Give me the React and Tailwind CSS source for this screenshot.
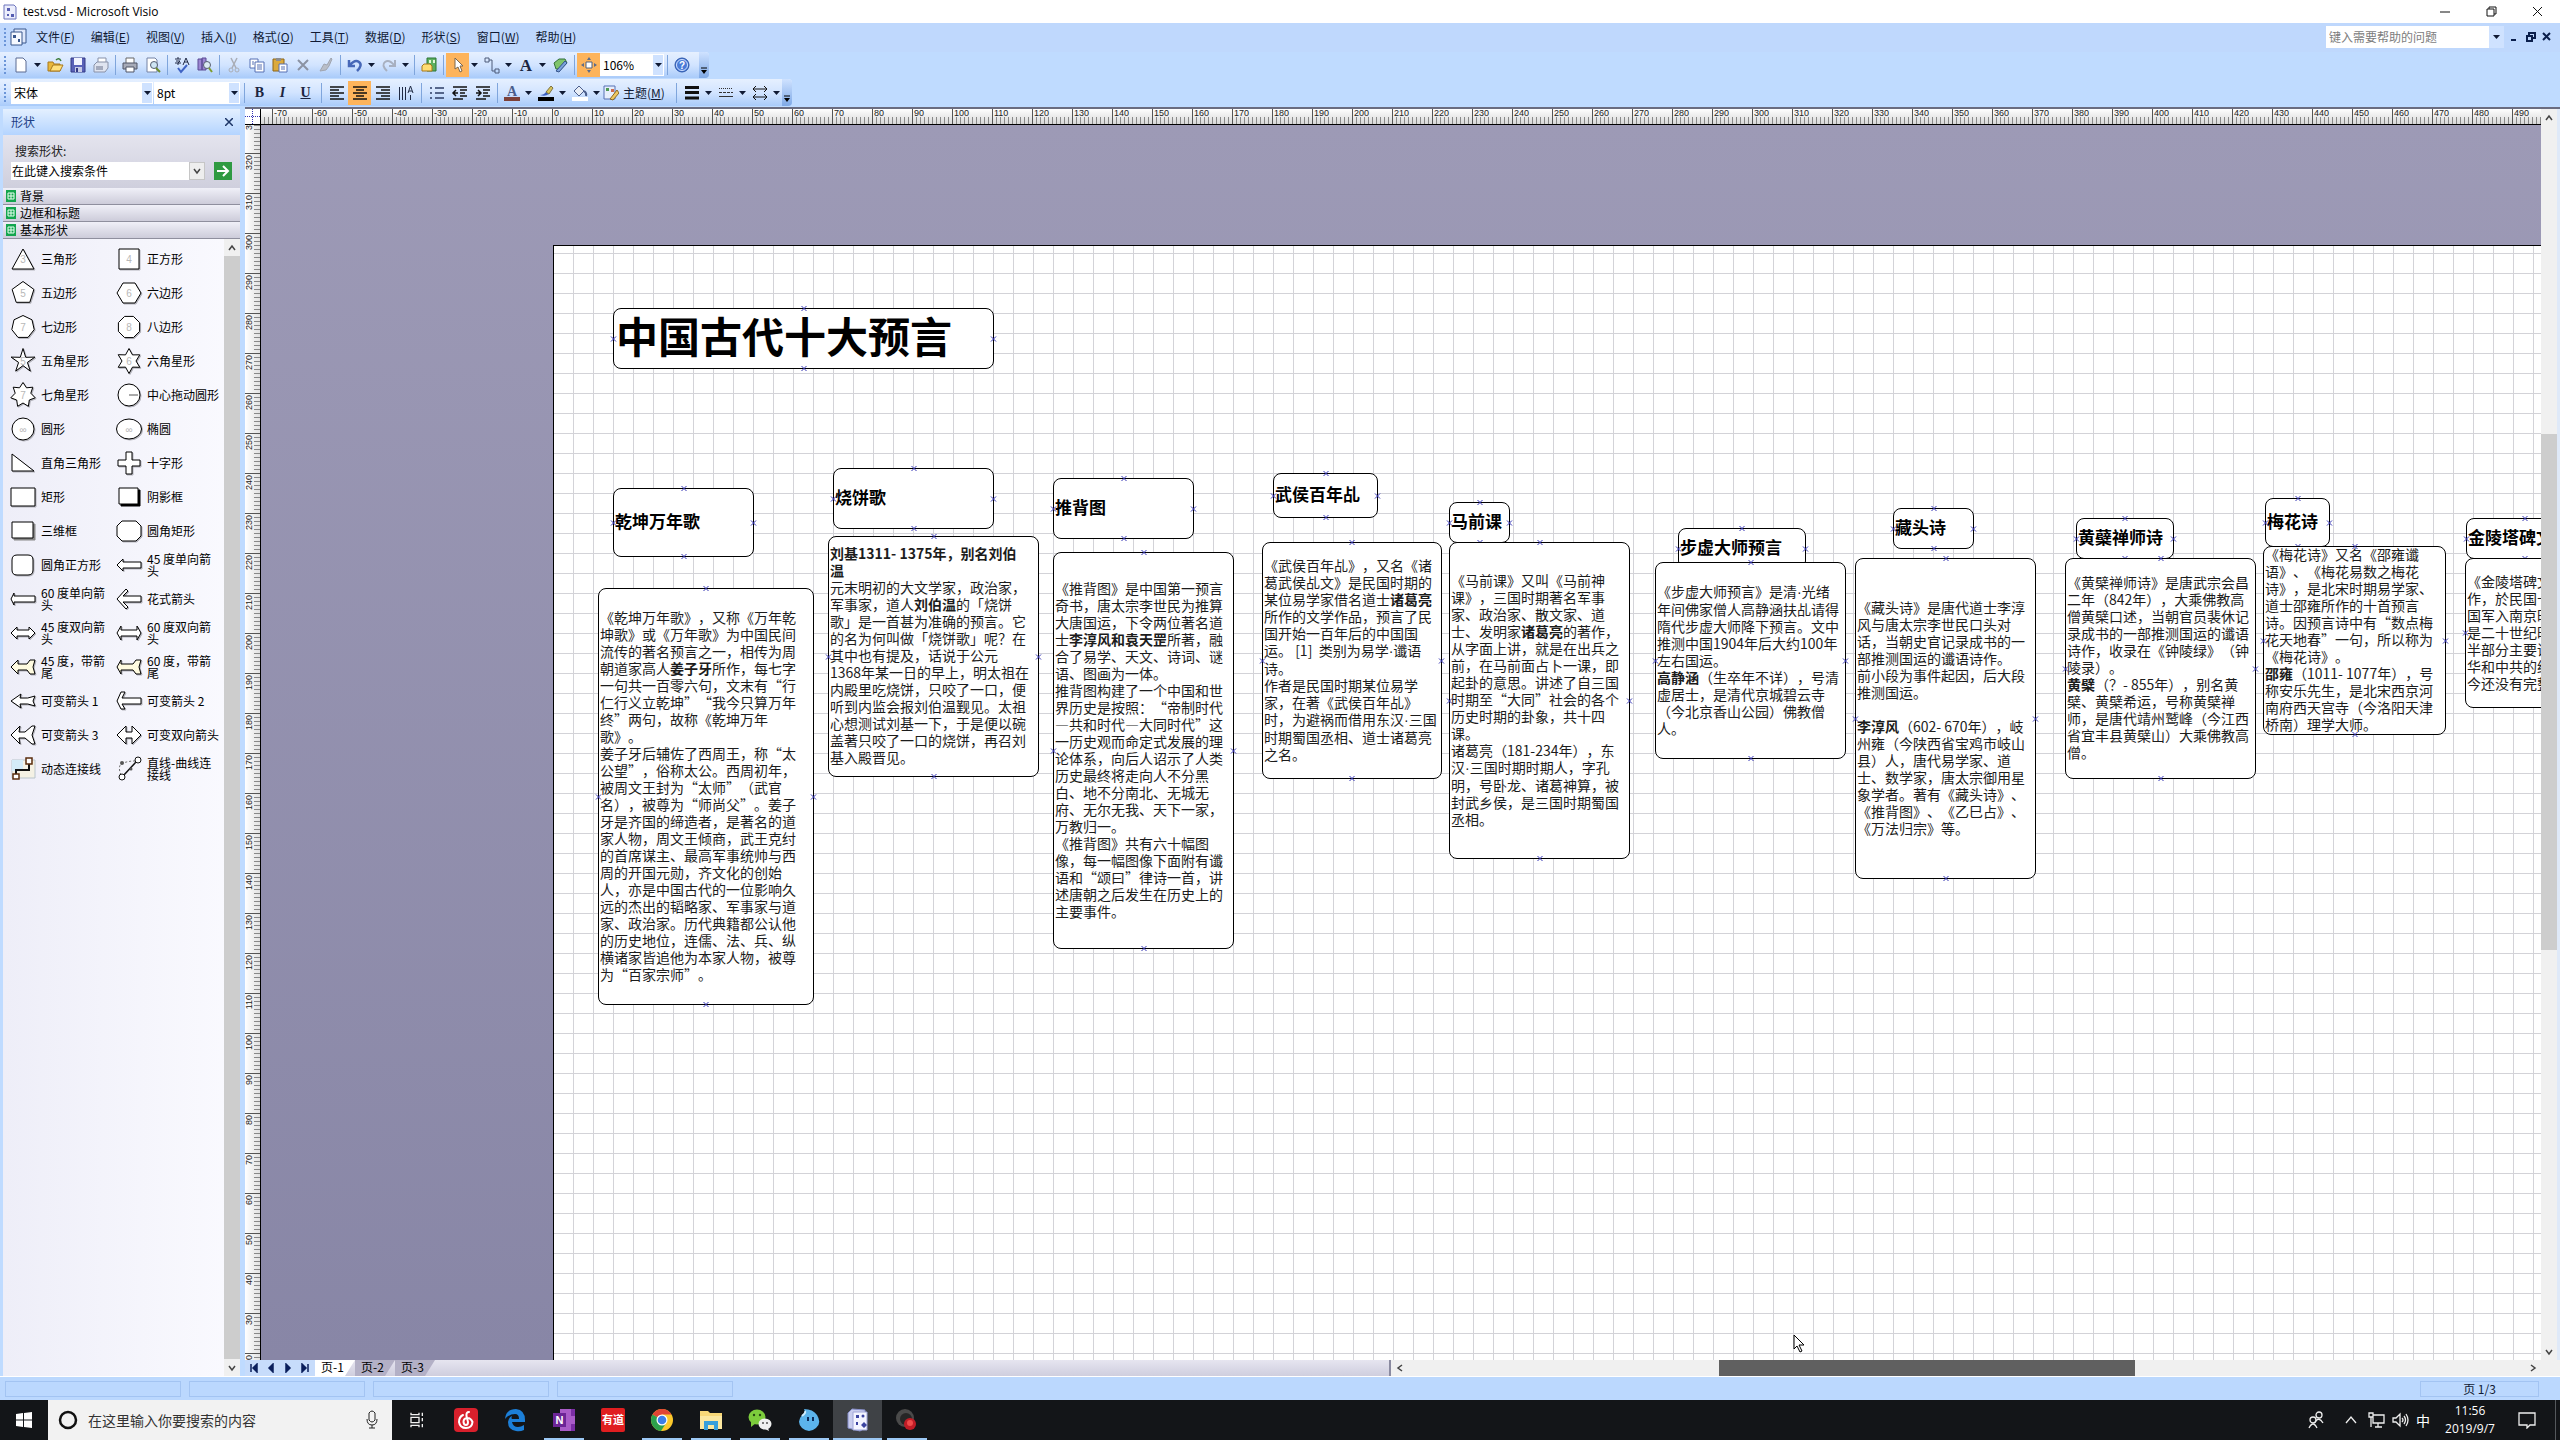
import React from "react";

const MENUS = [
  ["文件", "F"], ["编辑", "E"], ["视图", "V"], ["插入", "I"], ["格式", "O"],
  ["工具", "T"], ["数据", "D"], ["形状", "S"], ["窗口", "W"], ["帮助", "H"],
];

// x / y / w / h are page coordinates, *text* is bold
const NODES = [
  { x: 59, y: 62, w: 381, h: 61, kind: "title", lines: ["中国古代十大预言"] },
  { x: 59, y: 242, w: 141, h: 69, kind: "head", lines: ["乾坤万年歌"] },
  { x: 279, y: 222, w: 161, h: 61, kind: "head", lines: ["烧饼歌"] },
  { x: 499, y: 232, w: 141, h: 61, kind: "head", lines: ["推背图"] },
  { x: 719, y: 227, w: 105, h: 45, kind: "head", lines: ["武侯百年乩"] },
  { x: 895, y: 256, w: 61, h: 41, kind: "head", lines: ["马前课"] },
  { x: 1124, y: 282, w: 128, h: 41, kind: "head", lines: ["步虚大师预言"] },
  { x: 1339, y: 262, w: 81, h: 41, kind: "head", lines: ["藏头诗"] },
  { x: 1522, y: 272, w: 98, h: 41, kind: "head", lines: ["黄蘗禅师诗"] },
  { x: 1711, y: 252, w: 65, h: 49, kind: "head", lines: ["梅花诗"] },
  { x: 1912, y: 272, w: 117, h: 41, kind: "head", lines: ["金陵塔碑文"] },
  {
    x: 44, y: 342, w: 216, h: 417,
    lines: [
      "《乾坤万年歌》，又称《万年乾", "坤歌》或《万年歌》为中国民间", "流传的著名预言之一，相传为周",
      "朝道家高人*姜子牙*所作，每七字", "一句共一百零六句，文末有“行", "仁行义立乾坤”“我今只算万年",
      "终”两句，故称《乾坤万年", "歌》。", "姜子牙后辅佐了西周王，称“太", "公望”，俗称太公。西周初年，",
      "被周文王封为“太师”（武官", "名），被尊为“师尚父”。姜子", "牙是齐国的缔造者，是著名的道",
      "家人物，周文王倾商，武王克纣", "的首席谋主、最高军事统帅与西", "周的开国元勋，齐文化的创始",
      "人，亦是中国古代的一位影响久", "远的杰出的韬略家、军事家与道", "家、政治家。历代典籍都公认他",
      "的历史地位，连儒、法、兵、纵", "横诸家皆追他为本家人物，被尊", "为“百家宗师”。",
    ],
  },
  {
    x: 274, y: 290, w: 211, h: 241,
    lines: [
      "*刘基1311- 1375年，别名刘伯*", "*温*", "元末明初的大文学家，政治家，", "军事家，道人*刘伯温*的「烧饼",
      "歌」是一首甚为准确的预言。它", "的名为何叫做「烧饼歌」呢？在", "其中也有提及，话说于公元",
      "1368年某一日的早上，明太祖在", "内殿里吃烧饼，只咬了一口，便", "听到内监会报刘伯温觐见。太祖",
      "心想测试刘基一下，于是便以碗", "盖著只咬了一口的烧饼，再召刘", "基入殿晋见。",
    ],
  },
  {
    x: 499, y: 306, w: 181, h: 397,
    lines: [
      "《推背图》是中国第一预言", "奇书，唐太宗李世民为推算", "大唐国运，下令两位著名道", "士*李淳风和袁天罡*所著，融",
      "合了易学、天文、诗词、谜", "语、图画为一体。", "推背图构建了一个中国和世", "界历史是按照：“帝制时代",
      "—共和时代—大同时代”这", "一历史观而命定式发展的理", "论体系，向后人诏示了人类", "历史最终将走向人不分黑",
      "白、地不分南北、无城无", "府、无尔无我、天下一家，", "万教归一。", "《推背图》共有六十幅图", "像，每一幅图像下面附有谶",
      "语和“颂曰”律诗一首，讲", "述唐朝之后发生在历史上的", "主要事件。",
    ],
  },
  {
    x: 708, y: 296, w: 180, h: 237,
    lines: [
      "《武侯百年乩》，又名《诸", "葛武侯乩文》是民国时期的", "某位易学家借名道士*诸葛亮*", "所作的文学作品，预言了民",
      "国开始一百年后的中国国", "运。 [1]  类别为易学·谶语", "诗。", "作者是民国时期某位易学", "家，在著《武侯百年乩》",
      "时，为避祸而借用东汉·三国", "时期蜀国丞相、道士诸葛亮", "之名。",
    ],
  },
  {
    x: 895, y: 296, w: 181, h: 317,
    lines: [
      "《马前课》又叫《马前神", "课》，三国时期著名军事", "家、政治家、散文家、道", "士、发明家*诸葛亮*的著作，",
      "从字面上讲，就是在出兵之", "前，在马前面占卜一课，即", "起卦的意思。讲述了自三国", "时期至“大同”社会的各个",
      "历史时期的卦象，共十四", "课。", "诸葛亮（181-234年），东", "汉·三国时期时期人，字孔", "明，号卧龙、诸葛神算，被",
      "封武乡侯，是三国时期蜀国", "丞相。",
    ],
  },
  {
    x: 1101, y: 316, w: 191, h: 197,
    lines: [
      "《步虚大师预言》是清·光绪", "年间佛家僧人高静涵扶乩请得", "隋代步虚大师降下预言。文中", "推测中国1904年后大约100年",
      "左右国运。", "*高静涵*（生卒年不详），号清", "虚居士，是清代京城碧云寺", "（今北京香山公园）佛教僧", "人。",
    ],
  },
  {
    x: 1301, y: 312, w: 181, h: 321,
    lines: [
      "《藏头诗》是唐代道士李淳", "风与唐太宗李世民口头对", "话，当朝史官记录成书的一", "部推测国运的谶语诗作。", "前小段为事件起因，后大段",
      "推测国运。", "", "*李淳风*（602- 670年），岐", "州雍（今陕西省宝鸡市岐山", "县）人，唐代易学家、道", "士、数学家，唐太宗御用星",
      "象学者。著有《藏头诗》、", "《推背图》、《乙巳占》、", "《万法归宗》等。",
    ],
  },
  {
    x: 1511, y: 312, w: 191, h: 221,
    lines: [
      "《黄檗禅师诗》是唐武宗会昌", "二年（842年），大乘佛教高", "僧黄檗口述，当朝官员裴休记", "录成书的一部推测国运的谶语",
      "诗作，收录在《钟陵绿》（钟", "陵录）。", "*黄檗*（？- 855年），别名黄", "檗、黄檗希运，号称黄檗禅", "师，是唐代靖州鹫峰（今江西",
      "省宜丰县黄檗山）大乘佛教高", "僧。",
    ],
  },
  {
    x: 1709, y: 300, w: 183, h: 189,
    lines: [
      "《梅花诗》又名《邵雍谶", "语》、《梅花易数之梅花", "诗》，是北宋时期易学家、", "道士邵雍所作的十首预言", "诗。因预言诗中有“数点梅",
      "花天地春”一句，所以称为", "《梅花诗》。", "*邵雍*（1011- 1077年），号", "称安乐先生，是北宋西京河", "南府西天宫寺（今洛阳天津", "桥南）理学大师。",
    ],
  },
  {
    x: 1911, y: 312, w: 181, h: 150,
    lines: ["《金陵塔碑文》是刘伯温所", "作，於民国十六年北伐时，", "国军入南京时所发现，内容", "是二十世纪时中国的预言，", "半部分主要讲述国民党、中", "华和中共的纷争，预言至", "今还没有完整应验。"],
  },
];

// the middle dot is a narrow latin one
const dots = (s) =>
  s.split("·").map((t, i) => (
    <React.Fragment key={i}>
      {i > 0 && <span className="font-['Liberation_Sans',sans-serif]">·</span>}
      {t}
    </React.Fragment>
  ));

const rich = (line) => line.split("*").map((s, i) => (i % 2 ? <b key={i}>{s}</b> : <span key={i}>{dots(s)}</span>));

function Connector({ className }) {
  return (
    <svg viewBox="0 0 7 7" className={`absolute h-[7px] w-[7px] ${className}`}>
      <path d="M1 1L6 6M6 1L1 6" stroke="#3434b4" strokeWidth="1" />
    </svg>
  );
}

function Node({ node }) {
  const { x, y, w, h, kind, lines } = node;
  let text = "pb-[2px] pl-px text-sm leading-[17px] text-[#1c1c1c]";
  if (kind === "head") text = "pb-[4px] pl-px text-[17px] leading-5 font-bold text-black";
  if (kind === "title") text = "pb-[8px] pl-[2px] text-[42px] leading-[52px] font-bold text-black";
  return (
    <div
      className={`absolute flex flex-col justify-center rounded-lg border border-black bg-white whitespace-pre ${text}`}
      style={{ left: x, top: y, width: w, height: h }}
    >
      {lines.map((l, i) => (
        <div key={i}>{l ? rich(l) : "\u00a0"}</div>
      ))}
      <Connector className="-top-1 left-1/2 -translate-x-1/2" />
      <Connector className="-bottom-1 left-1/2 -translate-x-1/2" />
      <Connector className="top-1/2 -left-1 -translate-y-1/2" />
      <Connector className="top-1/2 -right-1 -translate-y-1/2" />
    </div>
  );
}

/* ---------- stencil shapes ---------- */

const ring = (n, r, inner, start = -90) => {
  const steps = inner ? n * 2 : n;
  const pts = [];
  for (let i = 0; i < steps; i++) {
    const a = ((start + (360 / steps) * i) * Math.PI) / 180;
    const rr = inner && i % 2 ? inner : r;
    pts.push(`${(13 + rr * Math.cos(a)).toFixed(1)} ${(13 + rr * Math.sin(a)).toFixed(1)}`);
  }
  return `M${pts.join("L")}Z`;
};
const CIRCLE = "M13 2A11 11 0 1 1 13 24A11 11 0 1 1 13 2Z";

const SHAPES = [
  { label: ["三角形"], d: "M13 3L24 23H2Z", t: "3" },
  { label: ["正方形"], d: "M3 3H23V23H3Z", t: "4" },
  { label: ["五边形"], d: ring(5, 11.5), t: "5" },
  { label: ["六边形"], d: "M7 3H19L25 13L19 23H7L1 13Z", t: "6" },
  { label: ["七边形"], d: ring(7, 11.5), t: "7" },
  { label: ["八边形"], d: ring(8, 11.5, 0, 22.5), t: "8" },
  { label: ["五角星形"], d: ring(5, 12.5, 4.6), t: "5" },
  { label: ["六角星形"], d: ring(6, 12.5, 7), t: "6" },
  { label: ["七角星形"], d: ring(7, 12.5, 8), t: "7" },
  { label: ["中心拖动圆形"], d: CIRCLE, extra: "M13 13H22" },
  { label: ["圆形"], d: CIRCLE, t: "∞" },
  { label: ["椭圆"], d: "M13 3A12.5 10 0 1 1 13 23A12.5 10 0 1 1 13 3Z", t: "∞" },
  { label: ["直角三角形"], d: "M2 4V21H24Z" },
  { label: ["十字形"], d: "M10 2H16V10H24V16H16V24H10V16H2V10H10Z" },
  { label: ["矩形"], d: "M1 4H25V22H1Z" },
  { label: ["阴影框"], d: "M3 4H22V20H3Z", shadow: "#000", off: 2 },
  { label: ["三维框"], d: "M2 4H23V20H2Z", shadow: "#888", off: 2 },
  { label: ["圆角矩形"], d: "M6 3H20L25 8V18L20 23H6L1 18V8Z", round: true },
  { label: ["圆角正方形"], d: "M7 3H18Q23 3 23 8V18Q23 23 18 23H7Q2 23 2 18V8Q2 3 7 3Z" },
  { label: ["45 度单向箭", "头"], d: "M1 13L7 7V10H25V16H7V19Z" },
  { label: ["60 度单向箭", "头"], d: "M1 13L4 7V10H25V16H4V19Z" },
  { label: ["花式箭头"], d: "M1 13L10 3L12 5L7 10H25V16H7L12 21L10 23Z" },
  { label: ["45 度双向箭", "头"], d: "M1 13L7 7V10H19V7L25 13L19 19V16H7V19Z" },
  { label: ["60 度双向箭", "头"], d: "M1 13L5 6V10H21V6L25 13L21 20V16H5V20Z" },
  { label: ["45 度，带箭", "尾"], d: "M1 13L8 6V10H17L20 6H25L23 13L25 20H20L17 16H8V20Z", fill: "#fffbe0" },
  { label: ["60 度，带箭", "尾"], d: "M1 13L5 6V10H17L20 6H25L23 13L25 20H20L17 16H5V20Z", fill: "#fffbe0" },
  { label: ["可变箭头 1"], d: "M1 13L11 6L10 10Q18 11 25 8L23 13L25 18Q18 15 10 16L11 20Z" },
  { label: ["可变箭头 2"], d: "M1 13L5 4H9L6 10H25V16H6L9 21H5Z" },
  { label: ["可变箭头 3"], d: "M1 13L10 4L9 10L15 10L22 4H25L22 13L25 22H22L15 16H9L10 22Z" },
  { label: ["可变双向箭头"], d: "M1 13L10 4V10H16V4L25 13L16 22V16H10V22Z" },
  { label: ["动态连接线"], kind: "dynamic" },
  { label: ["直线-曲线连", "接线"], kind: "curve" },
];

function ShapeIcon({ shape }) {
  const off = shape.off || 1;
  return (
    <svg viewBox="0 0 26 26" className="h-[26px] w-[26px] shrink-0 overflow-visible">
      {shape.kind === "dynamic" && (
        <>
          <path d="M2 4H25V22H2Z" fill="#f4f1e4" stroke="#b9c4cc" />
          <path d="M2 4H13V15H2Z" fill="#d4ebf8" />
          <path d="M6 18V14H19V8" fill="none" stroke="#111" strokeWidth="2" />
          <path d="M16 2H22V8H16ZM3 18H9V23H3Z" fill="#fff" stroke="#5a2c0c" strokeWidth="1.5" />
        </>
      )}
      {shape.kind === "curve" && (
        <>
          <path d="M5 19Q1 9 7 7T19 5" fill="none" stroke="#666" strokeDasharray="2 2" />
          <path d="M7 20L20 6" stroke="#111" strokeWidth="1.5" />
          <circle cx="6" cy="7" r="2" fill="#555" />
          <circle cx="15" cy="13" r="1.5" fill="#555" />
          <circle cx="22" cy="4" r="3" fill="#fff" stroke="#111" />
          <circle cx="6" cy="21" r="3" fill="#fff" stroke="#111" />
        </>
      )}
      {shape.d && (
        <>
          <path d={shape.d} transform={`translate(${off} ${off})`} fill={shape.shadow || "#b4b4bc"} stroke={shape.shadow || "#b4b4bc"} />
          <path d={shape.d} fill={shape.fill || "#fff"} stroke="#000" strokeLinejoin={shape.round ? "round" : "miter"} />
          {shape.extra && <path d={shape.extra} stroke="#555" />}
          {shape.t && (
            <text x="13" y="17" textAnchor="middle" fontSize="10" fill="#b8b8b8" fontFamily="Liberation Sans, sans-serif">{shape.t}</text>
          )}
        </>
      )}
    </svg>
  );
}

/* ---------- toolbar ---------- */

const ICONS = {
  new: <path d="M3 1H10L13 4V15H3Z" fill="#fff" stroke="#5a6a92" />,
  open: (
    <>
      <path d="M1 5H6L7 7H13V14H1Z" fill="#e9b83c" stroke="#a8781c" />
      <path d="M3 14L6 8H16L13 14Z" fill="#ffe07c" stroke="#a8781c" />
      <path d="M9 3Q12 0 14 4" fill="none" stroke="#3f7d3c" strokeWidth="1.5" />
    </>
  ),
  save: (
    <>
      <path d="M1 1H15V15H1Z" fill="#5a62b8" stroke="#343a86" />
      <path d="M4 1H12V8H4Z" fill="#f2f4ff" />
      <path d="M5 10H12V15H5Z" fill="#c7cbe6" />
      <path d="M6 11H8V15H6Z" fill="#343a86" />
    </>
  ),
  perm: (
    <>
      <path d="M5 1H13V8H5Z" fill="#fff" stroke="#8891a8" />
      <path d="M1 8L4 5H15V11L12 15H1Z" fill="#dfe4f0" stroke="#8891a8" />
      <path d="M3 10H10M3 12H10" stroke="#68708a" />
    </>
  ),
  print: (
    <>
      <path d="M4 1H12V7H4Z" fill="#fff" stroke="#666" />
      <path d="M1 6H15V12H1Z" fill="#a7abb8" stroke="#4f5566" />
      <path d="M4 10H12V15H4Z" fill="#fff" stroke="#4f5566" />
    </>
  ),
  preview: (
    <>
      <path d="M2 1H10L12 3V15H2Z" fill="#fff" stroke="#7482a4" />
      <circle cx="9" cy="8" r="3.5" fill="#cfe6f4" stroke="#555e70" />
      <path d="M11 11L15 15" stroke="#6d8c2e" strokeWidth="2" />
    </>
  ),
  spell: (
    <>
      <path d="M1 2H7M4 0V2M2 4H6L4 6V8M1 6H7M9 8L12 1L15 8M10 5H14" fill="none" stroke="#222b46" />
      <path d="M4 11L7 15L13 8" fill="none" stroke="#3f63c4" strokeWidth="2" />
    </>
  ),
  research: (
    <>
      <path d="M1 2H5V13H1ZM5 1H9V13H5Z" fill="#9c86d2" stroke="#5b4a94" />
      <circle cx="10" cy="8" r="3.5" fill="#dcebf4" stroke="#555e70" />
      <path d="M12 11L15 15" stroke="#7e9c2e" strokeWidth="2" />
    </>
  ),
  cut: (
    <>
      <path d="M5 1L10 11M11 1L6 11" stroke="#a9adb6" strokeWidth="1.5" />
      <circle cx="5" cy="13" r="2" fill="none" stroke="#a9adb6" />
      <circle cx="11" cy="13" r="2" fill="none" stroke="#a9adb6" />
    </>
  ),
  copy: (
    <>
      <path d="M1 2H9V11H1Z" fill="#fff" stroke="#5671b4" />
      <path d="M6 5H15V15H6Z" fill="#fff" stroke="#5671b4" />
      <path d="M8 8H13M8 10H13M8 12H13M3 5H5M3 7H5" stroke="#5671b4" />
    </>
  ),
  paste: (
    <>
      <path d="M1 2H12V14H1Z" fill="#dcaa3c" stroke="#8c6416" />
      <path d="M4 1H9V4H4Z" fill="#8e8e8e" />
      <path d="M7 7H15V15H7Z" fill="#fff" stroke="#5671b4" />
      <path d="M9 10H13M9 12H13" stroke="#5671b4" />
    </>
  ),
  del: <path d="M3 3L13 13M13 3L3 13" stroke="#8b93a4" strokeWidth="2" />,
  brush: <path d="M13 1L9 8L6 7L2 14L8 13L11 9L14 2Z" fill="#b9bec8" stroke="#a0a5b0" />,
  undo: <path d="M2 3V9H8M3 8Q8 2 12 5T10 14" fill="none" stroke="#4768b8" strokeWidth="2.5" />,
  redo: <path d="M14 3V9H8M13 8Q8 2 4 5T6 14" fill="none" stroke="#a8b0c0" strokeWidth="2" />,
  shapes: (
    <>
      <path d="M6 1H15V14H6Z" fill="#5db060" stroke="#2d7434" />
      <path d="M8 3H10V6H8ZM12 3H14V6H12Z" fill="#e2f6d8" />
      <path d="M1 9L3 7H9L11 9V14H1Z" fill="#ffdd74" stroke="#a8781c" />
    </>
  ),
  pointer: <path d="M5 1V12L8 10L10 15L12 14L10 9H13Z" fill="#fff" stroke="#7a6850" />,
  connector: <path d="M1 1H5V5H1ZM11 12H15V16H11ZM5 3H8V14H11" fill="none" stroke="#4d5b78" />,
  text: <text x="8" y="14" textAnchor="middle" fontSize="17" fontWeight="700" fontFamily="Liberation Serif, serif" fill="#1b2540">A</text>,
  ink: (
    <>
      <path d="M2 6L7 2H13L15 6L9 12H4Z" fill="#7fc46c" stroke="#34703a" />
      <path d="M4 14L13 4L15 6L7 15Z" fill="#7ba2dc" stroke="#35548c" />
    </>
  ),
  target: (
    <>
      <path d="M5 5H11V11H5Z" fill="#fff" stroke="#50607c" />
      <path d="M8 0L10 3H6ZM8 16L10 13H6ZM0 8L3 6V10ZM16 8L13 6V10Z" fill="#5d6c8a" />
    </>
  ),
  help: (
    <>
      <circle cx="8" cy="8" r="7" fill="#4a7bd8" stroke="#2b55a8" />
      <circle cx="8" cy="8" r="5.5" fill="none" stroke="#cfe0ff" />
      <text x="8" y="12" textAnchor="middle" fontSize="10" fontWeight="700" fontFamily="Liberation Sans, sans-serif" fill="#fff">?</text>
    </>
  ),
  left: <path d="M1 2H15M1 5H10M1 8H15M1 11H10M1 14H15" stroke="#111" strokeWidth="1.5" />,
  center: <path d="M1 2H15M4 5H12M1 8H15M4 11H12M1 14H15" stroke="#111" strokeWidth="1.5" />,
  right: <path d="M1 2H15M6 5H15M1 8H15M6 11H15M1 14H15" stroke="#111" strokeWidth="1.5" />,
  vertical: <path d="M1.5 2V15M4.5 2V15M7.5 2V15M10 8L12.500 1L15 8M11 6H14M12.500 10V15" fill="none" stroke="#1f2a44" />,
  bullets: <path d="M1 3H3M1 8H3M1 13H3M6 3H15M6 8H15M6 13H15" stroke="#2c3c66" strokeWidth="1.5" />,
  outdent: <path d="M1 2H15M8 5H15M8 8H13M8 11H15M1 14H11M6 8H1M4 5L1 8L4 11" fill="none" stroke="#111" strokeWidth="1.5" />,
  indent: <path d="M1 2H15M8 5H15M8 8H13M8 11H15M1 14H11M1 8H6M3 5L6 8L3 11" fill="none" stroke="#111" strokeWidth="1.5" />,
  fontcolor: (
    <>
      <text x="8" y="11" textAnchor="middle" fontSize="14" fontWeight="700" fontFamily="Liberation Serif, serif" fill="#4b5e8c">A</text>
      <path d="M0 12H16V16H0Z" fill="#7d4038" />
    </>
  ),
  linecolor: (
    <>
      <path d="M2 10Q6 10 8 7L11 9Q7 12 2 10Z" fill="#3a5fc0" />
      <path d="M8 7L13 1L15 3L11 9Z" fill="#d9c45a" stroke="#7c7242" />
      <path d="M0 12H16V16H0Z" fill="#000" />
    </>
  ),
  fill: (
    <>
      <path d="M2 6L7 1L12 6L7 11Z" fill="#e8edf6" stroke="#4b5e8c" />
      <path d="M12 6Q15 8 14 11" fill="none" stroke="#4b5e8c" strokeWidth="2" />
      <path d="M0 12H16V16H0Z" fill="#fff" />
    </>
  ),
  theme: (
    <>
      <path d="M1 1H12V14H1Z" fill="#e6eefc" stroke="#5671b4" />
      <path d="M3 3H6V6H3Z" fill="#4f9b54" />
      <path d="M8 4H11V7H8Z" fill="#d06c4c" />
      <path d="M7 14L14 5L16 8L10 15Z" fill="#f0c860" stroke="#8a6a24" />
    </>
  ),
  weight: <path d="M1 2.5H15M1 7.5H15M1 13H15" stroke="#111" strokeWidth="3" />,
  dash: (
    <>
      <path d="M1 3.5H15" stroke="#333" strokeDasharray="1 1" />
      <path d="M1 7.5H15" stroke="#333" strokeDasharray="3 1" />
      <path d="M1 11.5H15" stroke="#333" />
    </>
  ),
  ends: <path d="M1 4H15M12 1L15 4L12 7M4 1L1 4L4 7M1 12H15M4 9L1 12L4 15M12 9L15 12L12 15" fill="none" stroke="#111" />,
};

const TB1 = [
  "new", "v", "open", "save", "perm", "|", "print", "preview", "|", "spell", "research", "|",
  "cut", "copy", "paste", "del", "brush", "|", "undo", "v", "redo", "v", "|", "shapes", "|",
  "pointer", "v", "connector", "v", "text", "v", "ink", "|", "target",
];
const ACTIVE = ["pointer", "target", "center"];

const Caret = () => (
  <svg viewBox="0 0 7 4" className="h-1 w-[7px]">
    <path d="M0 0H7L3.5 4Z" fill="#101a34" />
  </svg>
);

function Tool({ id }) {
  if (id === "|") return <span className="flex w-[6px] shrink-0 justify-center"><i className="h-5 w-px bg-[#7fa5dc]" /></span>;
  if (id === "v") return <button aria-label="more" className="flex h-6 w-[11px] shrink-0 items-center justify-center"><Caret /></button>;
  return (
    <button aria-label={id} className={`flex h-6 w-[23px] shrink-0 items-center justify-center ${ACTIVE.includes(id) ? "bg-[#fdb45c]" : ""}`}>
      <svg viewBox="0 0 16 16" className="h-4 w-4 overflow-visible">{ICONS[id]}</svg>
    </button>
  );
}

const Grip = () => (
  <span className="flex w-[9px] shrink-0 justify-center">
    <i className="h-[18px] border-l-2 border-dotted border-[#6b95d8]" />
  </span>
);

const Overflow = () => (
  <button aria-label="toolbar options" className="flex h-full w-[10px] shrink-0 items-end justify-center rounded-r bg-gradient-to-b from-[#cfe2ff] to-[#7fa9e6] pb-1">
    <svg viewBox="0 0 6 7" className="h-[7px] w-[6px]"><path d="M0 1H6" stroke="#000" /><path d="M0 3H6L3 7Z" fill="#000" /></svg>
  </button>
);

function Combo({ label, value, width, options }) {
  return (
    <label className={`relative flex h-[22px] shrink-0 bg-white ${width}`}>
      <select aria-label={label} defaultValue={value} className="h-full w-full appearance-none bg-white pl-[3px] text-xs leading-5 text-black">
        {options.map((o) => <option key={o}>{o}</option>)}
      </select>
      <span className="pointer-events-none absolute inset-y-px right-px flex w-[10px] items-center justify-center bg-[#cfe2ff]"><Caret /></span>
    </label>
  );
}

function Toolbars() {
  return (
    <div className="flex shrink-0 flex-col items-start gap-px bg-[#bfdbff] pb-px">
      <div className="flex h-[26px] items-center rounded-r bg-gradient-to-b from-[#e6f0ff] via-[#d2e4ff] to-[#a9cbfa]">
        <Grip />
        {TB1.map((id, i) => <Tool key={i} id={id} />)}
        <Combo label="缩放" value="106%" width="w-[64px]" options={["106%", "100%", "75%"]} />
        <Tool id="|" />
        <Tool id="help" />
        <span className="w-[6px]" />
        <Overflow />
      </div>
      <div className="flex h-[27px] items-center rounded-r bg-gradient-to-b from-[#e6f0ff] via-[#d2e4ff] to-[#a9cbfa]">
        <Grip />
        <span className="w-[2px]" />
        <Combo label="字体" value="宋体" width="w-[142px]" options={["宋体", "黑体"]} />
        <span className="w-px" />
        <Combo label="字号" value="8pt" width="w-[86px]" options={["8pt", "10pt", "12pt"]} />
        <span className="flex w-2 justify-center"><i className="h-5 w-px bg-[#7fa5dc]" /></span>
        <button className="w-[23px] font-['Liberation_Serif',serif] text-sm font-bold text-[#1b2540]">B</button>
        <button className="w-[23px] font-['Liberation_Serif',serif] text-sm font-bold text-[#1b2540] italic">I</button>
        <button className="w-[23px] font-['Liberation_Serif',serif] text-sm font-bold text-[#1b2540] underline">U</button>
        <span className="flex w-2 justify-center"><i className="h-5 w-px bg-[#7fa5dc]" /></span>
        {["left", "center", "right", "vertical"].map((id) => <Tool key={id} id={id} />)}
        <span className="flex w-2 justify-center"><i className="h-5 w-px bg-[#7fa5dc]" /></span>
        {["bullets", "outdent", "indent", "|", "fontcolor", "v", "linecolor", "v", "fill", "v"].map((id, i) => <Tool key={i} id={id} />)}
        <button className="flex h-6 w-[70px] items-center gap-1 pl-px text-xs whitespace-nowrap text-[#101a34]">
          <svg viewBox="0 0 16 16" className="h-4 w-4 shrink-0">{ICONS.theme}</svg>
          <span>主题(<u>M</u>)</span>
        </button>
        <span className="flex w-2 justify-center"><i className="h-5 w-px bg-[#7fa5dc]" /></span>
        {["weight", "v", "dash", "v", "ends", "v"].map((id, i) => <Tool key={i} id={id} />)}
        <Overflow />
      </div>
    </div>
  );
}

/* ---------- rulers ---------- */

const H_MARKS = Array.from({ length: 57 }, (_, i) => -70 + i * 10);
const V_MARKS = Array.from({ length: 32 }, (_, i) => 330 - i * 10);

function HRuler() {
  return (
    <div className="flex h-4 min-w-0 flex-1 overflow-hidden border-b border-black bg-gradient-to-b from-white to-[#d8d8d8]">
      <div className="h-[15px] w-[11px] shrink-0 bg-[repeating-linear-gradient(to_left,transparent_0_3px,#888_3px_4px)] bg-[length:100%_7px] bg-bottom bg-no-repeat" />
      {H_MARKS.map((m) => (
        <div key={m} className="h-[15px] w-10 shrink-0 border-l border-[#555] bg-[repeating-linear-gradient(to_right,transparent_0_3px,#888_3px_4px)] bg-[length:100%_7px] bg-bottom bg-no-repeat">
          <span className="block pl-px font-['Liberation_Sans',sans-serif] text-[9px] leading-[8px] text-[#222]">{m}</span>
        </div>
      ))}
    </div>
  );
}

function VRuler() {
  return (
    <div className="h-full w-4 shrink-0 overflow-hidden border-r border-black bg-gradient-to-r from-white to-[#e2e2e2]">
      <div className="-mt-3">
        {V_MARKS.map((m) => (
          <div key={m} className="h-10 w-[15px] border-t border-[#555] bg-[repeating-linear-gradient(to_bottom,transparent_0_3px,#888_3px_4px)] bg-[length:6px_100%] bg-right bg-no-repeat">
            <span className="block rotate-180 pb-px pl-[6px] font-['Liberation_Sans',sans-serif] text-[9px] leading-[9px] text-[#222] [writing-mode:vertical-rl]">{m}</span>
          </div>
        ))}
      </div>
    </div>
  );
}

const Chevron = ({ d, className = "h-2 w-2" }) => (
  <svg viewBox="0 0 8 8" className={className}><path d={d} fill="none" stroke="#444" strokeWidth="1.5" /></svg>
);
const UP = "M1 6L4 2L7 6";
const DOWN = "M1 2L4 6L7 2";

function Stencils() {
  return (
    <aside className="flex w-[245px] shrink-0 flex-col border-l-[3px] border-[#bfdbff] bg-[#bfdbff] pt-[2px] pr-[5px]">
      <div className="flex h-[26px] shrink-0 items-center justify-between bg-gradient-to-b from-[#e4f0ff] to-[#b4d4ff] pr-[7px] pl-2">
        <h2 className="text-xs text-[#1d3f86]">形状</h2>
        <button aria-label="close"><svg viewBox="0 0 8 8" className="h-2 w-2"><path d="M0 0L8 8M8 0L0 8" stroke="#1d3566" strokeWidth="1.5" /></svg></button>
      </div>
      <div className="flex h-[53px] shrink-0 flex-col bg-gradient-to-b from-[#e4e4ee] to-[#cfcfdd] px-2 pt-[7px] pb-2">
        <label htmlFor="find" className="pl-1 text-xs leading-[18px] text-[#222]">搜索形状:</label>
        <div className="mt-0.5 flex h-[18px] shrink-0">
          <input id="find" defaultValue="在此键入搜索条件" className="w-[178px] bg-white pl-px text-xs text-black" />
          <button aria-label="history" className="flex w-4 items-center justify-center border border-[#c6c6c6] bg-[#eeeeee]"><Chevron d={DOWN} /></button>
          <button aria-label="search" className="ml-[9px] flex w-[18px] items-center justify-center bg-[#2f9a41]">
            <svg viewBox="0 0 16 16" className="h-4 w-4"><path d="M2 8H13M8 3L13 8L8 13" fill="none" stroke="#fff" strokeWidth="2" /></svg>
          </button>
        </div>
      </div>
      {["背景", "边框和标题", "基本形状"].map((s) => (
        <button key={s} className="flex h-[17px] shrink-0 items-center gap-1 border-b border-[#8f8f9e] bg-gradient-to-b from-[#f0f0f8] to-[#cdccda] pl-[3px] text-left text-xs leading-4 text-black">
          <svg viewBox="0 0 10 12" className="h-3 w-[10px]">
            <path d="M0 0H10V12H0Z" fill="#14a54e" /><path d="M2 3H8V9H2ZM5 3V9M2 6H8" fill="none" stroke="#e8fff0" />
          </svg>
          {s}
        </button>
      ))}
      <div className="flex min-h-0 flex-1 bg-gradient-to-r from-[#eeeef8] to-[#fafaff]">
        <div className="grid flex-1 grid-cols-[106px_107px] content-start pt-[3px] pl-[7px]">
          {SHAPES.map((s) => (
            <div key={s.label[0]} className="flex h-[34px] items-center gap-[5px]">
              <ShapeIcon shape={s} />
              <p className="text-xs leading-3 whitespace-nowrap text-black">
                {s.label.map((l) => <span key={l} className="block">{l}</span>)}
              </p>
            </div>
          ))}
        </div>
        <div className="flex w-4 shrink-0 flex-col bg-[#f0f0f0]">
          <button aria-label="up" className="flex h-[17px] items-center justify-center"><Chevron d={UP} /></button>
          <div className="flex-1 bg-[#cdcdcd]" />
          <button aria-label="down" className="flex h-[17px] items-center justify-center"><Chevron d={DOWN} /></button>
        </div>
      </div>
    </aside>
  );
}

const NAV = ["M2 1V9M8 1L4 5L8 9Z", "M7 1L3 5L7 9Z", "M3 1L7 5L3 9Z", "M8 1V9M2 1L6 5L2 9Z"];

function PageTabs() {
  return (
    <div className="flex h-4 shrink-0 bg-[#f0f0f0]">
      <div className="flex w-[1146px] shrink-0 border-r-2 border-[#8a8aa0] bg-gradient-to-b from-[#e6e5f0] to-[#cfcede]">
        <div className="flex w-[70px] shrink-0 bg-[#c7dcfb]">
          {NAV.map((d) => (
            <button key={d} aria-label="page" className="flex w-[17px] items-center justify-center">
              <svg viewBox="0 0 10 10" className="h-[10px] w-[10px]"><path d={d} fill="#0b1f5c" stroke="#0b1f5c" strokeWidth="1.5" /></svg>
            </button>
          ))}
        </div>
        {["页-1", "页-2", "页-3"].map((p, i) => (
          <button key={p} className={`w-10 pb-[2px] pl-1.5 text-left text-xs leading-[14px] text-black [clip-path:polygon(0_0,100%_0,75%_100%,0_100%)] ${i ? "bg-[#b3b0c6]" : "bg-white"}`}>{p}</button>
        ))}
      </div>
      <button aria-label="left" className="flex w-[17px] items-center justify-center"><Chevron d="M6 1L2 4L6 7" /></button>
      <div className="flex min-w-0 flex-1">
        <div className="w-[311px] shrink-0" />
        <div className="w-[416px] shrink-0 bg-[#606060]" />
      </div>
      <button aria-label="right" className="flex w-[17px] items-center justify-center"><Chevron d="M2 1L6 4L2 7" /></button>
      <div className="w-[19px] shrink-0" />
    </div>
  );
}

function Drawing() {
  return (
    <main className="flex min-w-0 flex-1 flex-col border-t-2 border-[#6a6c80]">
      <div className="flex min-h-0 flex-1">
        <div className="flex min-w-0 flex-1 flex-col">
          <div className="flex shrink-0">
            <div className="flex h-4 w-4 shrink-0 items-center justify-center border-r border-b border-black bg-white">
              <svg viewBox="0 0 15 15" className="h-full w-full"><path d="M7.5 0V15M0 7.5H15" stroke="#3434b4" strokeDasharray="1 1" /></svg>
            </div>
            <HRuler />
          </div>
          <div className="flex min-h-0 flex-1">
            <VRuler />
            <div className="flex min-w-0 flex-1 flex-col overflow-hidden bg-gradient-to-b from-[#9d9ab6] to-[#8886a6] pt-[120px] pl-[292px]">
              <div className="relative flex-1 border-t border-l border-black bg-white bg-[linear-gradient(to_right,#d3d3d8_1px,transparent_1px),linear-gradient(to_bottom,#d3d3d8_1px,transparent_1px)] bg-[length:20px_20px] bg-[position:19px_7px] [text-spacing-trim:space-all]">
                {NODES.map((n, i) => <Node key={i} node={n} />)}
                <svg viewBox="0 0 12 19" className="absolute top-[1088px] left-[1239px] h-[19px] w-3">
                  <path d="M1 1V15L4 12L7 18L9 17L6 11H11Z" fill="#fff" stroke="#000" />
                </svg>
              </div>
            </div>
          </div>
        </div>
        <div className="flex w-[19px] shrink-0 flex-col items-center border-r-[3px] border-[#dfe9f8] bg-[#f0f0f0]">
          <button aria-label="up" className="flex h-[17px] items-center justify-center"><Chevron d={UP} /></button>
          <div className="h-[308px] shrink-0" />
          <div className="h-[516px] w-full shrink-0 bg-[#cdcdcd]" />
          <div className="flex-1" />
          <button aria-label="down" className="flex h-[17px] items-center justify-center"><Chevron d={DOWN} /></button>
        </div>
      </div>
      <PageTabs />
    </main>
  );
}

/* ---------- taskbar ---------- */

const APPS = [
  {
    name: "task view",
    art: <path d="M3 1V4H15V1M3 23V20H15V23M3 8H15V16H3ZM20 1V6M20 18V23M20 9V14" fill="none" stroke="#f2f2f2" strokeWidth="2" />,
  },
  {
    name: "music",
    art: (
      <>
        <rect width="24" height="24" rx="4" fill="#d8202c" />
        <path d="M15 4Q12 4 12.5 8L14 14Q14 17 12 17T9.500 14Q9.500 10.500 13 10T18.500 14Q18 20 12 20T5 14Q5 9 9 7" fill="none" stroke="#fff" strokeWidth="2" strokeLinecap="round" />
      </>
    ),
  },
  {
    name: "edge",
    art: <path d="M2 11Q3 1 13 1Q22 2 22 12V14H9Q10 19 15 19Q18 19 21 17V22Q17 24 13 23Q5 22 5 14Q6 9 9 8Q8 10 9 11H16Q16 6 12 6Q6 6 2 11Z" fill="#1c7fd8" />,
  },
  {
    name: "onenote",
    line: true,
    art: (
      <>
        <path d="M8 1H23V23H8Z" fill="#a95cc8" /><path d="M19 1H23V8H19ZM19 16H23V23H19Z" fill="#7a2ea4" />
        <path d="M1 5H14V19H1Z" fill="#6c2596" />
        <text x="7.500" y="16" textAnchor="middle" fontSize="11" fontWeight="700" fontFamily="Liberation Sans, sans-serif" fill="#fff">N</text>
      </>
    ),
  },
  {
    name: "youdao",
    art: (
      <>
        <rect width="24" height="24" rx="2" fill="#e01e20" />
        <text x="12" y="16" textAnchor="middle" fontSize="11" fontWeight="700" fontFamily="Noto Sans CJK SC, sans-serif" fill="#fff">有道</text>
      </>
    ),
  },
  {
    name: "chrome",
    line: true,
    art: (
      <>
        <circle cx="12" cy="12" r="11" fill="#fbc82c" />
        <path d="M12 12L2.500 6.500A11 11 0 0 1 21.500 6.500H12Z" fill="#e04434" />
        <path d="M12 12L2.500 6.500A11 11 0 0 0 11 23L16.500 14.500Z" fill="#2ca04c" />
        <circle cx="12" cy="12" r="5.500" fill="#fff" /><circle cx="12" cy="12" r="4.300" fill="#3c7ee8" />
      </>
    ),
  },
  {
    name: "explorer",
    line: true,
    art: (
      <>
        <path d="M1 3H9L11 5H23V21H1Z" fill="#f8d878" /><path d="M1 8H23V21H1Z" fill="#fce8a0" />
        <path d="M5 13H19V22H15V17H9V22H5Z" fill="#38a0dc" />
      </>
    ),
  },
  {
    name: "wechat",
    line: true,
    art: (
      <>
        <ellipse cx="9" cy="9" rx="8.500" ry="7.500" fill="#7ccc3c" /><path d="M3 14L3 19L8 15Z" fill="#7ccc3c" />
        <circle cx="6" cy="7" r="1.200" fill="#244a12" /><circle cx="12" cy="7" r="1.200" fill="#244a12" />
        <ellipse cx="17" cy="16" rx="6.500" ry="5.500" fill="#f0f0f0" /><path d="M20 20L21 23L17 21Z" fill="#f0f0f0" />
        <circle cx="15" cy="15" r="1" fill="#555" /><circle cx="19" cy="15" r="1" fill="#555" />
      </>
    ),
  },
  {
    name: "drop",
    line: true,
    art: (
      <>
        <path d="M7 1Q16 1 20 7Q25 15 19 20Q12 26 5 20Q-1 14 5 7Q9 5 7 1Z" fill="#5cb4ec" />
        <path d="M5 8Q9 5 8 3" stroke="#d2efff" strokeWidth="2" fill="none" />
        <path d="M11 9V13M16 9V13" stroke="#0c2c5c" strokeWidth="2" />
      </>
    ),
  },
  {
    name: "visio",
    line: true,
    active: true,
    art: (
      <>
        <path d="M2 5L6 1L19 2V20L14 23L2 20Z" fill="#c9cdee" stroke="#8890cc" />
        <path d="M7 4H21V22H7Z" fill="#f4f5ff" stroke="#a0a6d8" />
        <path d="M10 7H13V10H10ZM10 14H12V17H10ZM18 14L21 17L18 20L15 17Z" fill="#3c44a0" />
        <circle cx="17" cy="8" r="1.500" fill="#3c44a0" />
      </>
    ),
  },
  {
    name: "recorder",
    line: true,
    art: (
      <>
        <circle cx="10" cy="10" r="9" fill="#4a4a4a" /><circle cx="11" cy="11" r="6" fill="#262626" />
        <circle cx="15" cy="16" r="6" fill="#c01c26" /><circle cx="15" cy="15" r="3" fill="#f04a4a" />
      </>
    ),
  },
];

function Taskbar() {
  return (
    <footer className="flex h-10 shrink-0 items-stretch bg-[#131518] text-white">
      <button aria-label="start" className="flex w-12 items-center justify-center">
        <svg viewBox="0 0 16 16" className="h-4 w-4"><path d="M0 2L7 1V7.500H0ZM8 1L16 0V7.500H8ZM0 8.500H7V15L0 14ZM8 8.500H16V16L8 15Z" fill="#fff" /></svg>
      </button>
      <label className="flex w-[344px] items-center bg-[#f2f2f2] pr-3 pl-[10px]">
        <svg viewBox="0 0 20 20" className="h-5 w-5 shrink-0"><circle cx="10" cy="10" r="8" fill="none" stroke="#111" strokeWidth="2.500" /></svg>
        <input aria-label="搜索" placeholder="在这里输入你要搜索的内容" className="ml-[10px] min-w-0 flex-1 text-sm placeholder:text-[#333]" />
        <svg viewBox="0 0 16 20" className="h-5 w-4 shrink-0"><path d="M5 3Q8 -1 11 3V10Q8 14 5 10ZM3 9Q3 15 8 15T13 9M8 15V18M5 18H11" fill="none" stroke="#222" /></svg>
      </label>
      {APPS.map((a) => (
        <button key={a.name} aria-label={a.name} className={`relative flex w-[49px] items-center justify-center ${a.active ? "bg-[#3f4246]" : ""}`}>
          <svg viewBox="0 0 24 24" className={a.name === "task view" ? "h-4 w-4" : "h-6 w-6"}>{a.art}</svg>
          {a.line && <i className={`absolute bottom-0 h-[2px] bg-[#9cc8f4] ${a.active ? "w-full" : "w-10"}`} />}
        </button>
      ))}
      <div className="ml-auto flex items-center">
        <svg viewBox="0 0 20 20" className="mr-[18px] h-5 w-5" fill="none" stroke="#eee" strokeWidth="1.300">
          <circle cx="13" cy="5" r="3" /><path d="M9 12Q13 6 17 13M3 18Q7 10 11 18" /><circle cx="7" cy="10" r="3" />
        </svg>
        <svg viewBox="0 0 14 14" className="mr-[10px] h-[14px] w-[14px]"><path d="M2 10L7 4L12 10" fill="none" stroke="#eee" strokeWidth="1.300" /></svg>
        <svg viewBox="0 0 18 18" className="mr-1.5 h-[18px] w-[18px]" fill="none" stroke="#eee" strokeWidth="1.300"><path d="M5 4H16V12H5ZM10 12V16M7 16H14M1 2H5V6H1ZM3 6V16" /></svg>
        <svg viewBox="0 0 18 18" className="mr-1.5 h-[18px] w-[18px]" fill="none" stroke="#eee" strokeWidth="1.300"><path d="M1 7H4L8 3V15L4 11H1ZM10 7Q12 9 10 11M12 5Q15 9 12 13M14 3Q18 9 14 15" /></svg>
        <span className="w-[14px] text-sm">中</span>
        <div className="w-20 text-center font-['Open_Sans',sans-serif] text-xs leading-[18px]">
          <div>11:56</div>
          <div>2019/9/7</div>
        </div>
        <button aria-label="notifications" className="mr-[19px] ml-2 flex w-[18px] justify-center">
          <svg viewBox="0 0 18 18" className="h-[18px] w-[18px]"><path d="M1 2H17V14H12L9 17V14H1Z" fill="none" stroke="#eee" strokeWidth="1.300" /></svg>
        </button>
        <i className="mr-1 h-10 w-px bg-[#55585c]" />
      </div>
    </footer>
  );
}

export default function App() {
  return (
    <div lang="zh-CN" className="flex h-screen flex-col overflow-hidden bg-[#bfdbff] font-['Noto_Sans_CJK_SC',sans-serif] text-xs">
      <header className="flex h-[23px] shrink-0 items-center bg-white pl-[2px]">
        <svg viewBox="0 0 16 16" className="h-4 w-4"><path d="M2 1H12L14 3V15H2Z" fill="#eceefc" stroke="#6d74bc" /><path d="M5 4H8V7H5ZM9 10H12V13H9ZM5 10H7V12H5Z" fill="#555cb0" /></svg>
        <h1 className="ml-[5px] font-['Open_Sans',sans-serif] text-xs text-black">test.vsd - Microsoft Visio</h1>
        <div className="ml-auto flex">
          {["M0 6H10", "M1 3H8V10H1ZM3 3V1H10V8H8", "M1 1L10 10M10 1L1 10"].map((d) => (
            <button key={d} aria-label="window" className="flex h-[22px] w-[46px] items-center justify-center">
              <svg viewBox="0 0 11 11" className="h-[11px] w-[11px]"><path d={d} fill="none" stroke="#111" /></svg>
            </button>
          ))}
        </div>
      </header>
      <nav className="flex h-[29px] shrink-0 items-center bg-[#bfd8fd] pb-[2px]">
        <Grip />
        <svg viewBox="0 0 18 18" className="mr-px h-[18px] w-[18px]"><path d="M5 1H17V15H5Z" fill="#dfe8fb" stroke="#38568c" /><path d="M2 4H13V17H2Z" fill="#f6f9ff" stroke="#38568c" /><path d="M4 7H7V10H4ZM9 11H11V14H9Z" fill="#38568c" /></svg>
        {MENUS.map(([name, key]) => (
          <button key={key} className="px-2 text-xs whitespace-nowrap text-[#101a34]">{name}(<u>{key}</u>)</button>
        ))}
        <div className="mr-[8px] ml-auto flex items-center">
          <input aria-label="帮助" placeholder="键入需要帮助的问题" className="h-[22px] w-[163px] bg-white pl-[3px] text-xs placeholder:text-[#7d7d7d]" />
          <button aria-label="open" className="flex h-[22px] w-[15px] items-center justify-center bg-[#cfe2ff]"><Caret /></button>
          {["M1 8H6", "M1 4H6V9H1ZM3 4V1H9V6H6", "M1 1L8 8M8 1L1 8"].map((d) => (
            <button key={d} aria-label="document" className="ml-[6px] flex w-[10px] items-center justify-center"><svg viewBox="0 0 10 10" className="h-[10px] w-[10px]"><path d={d} fill="none" stroke="#0b1f4c" strokeWidth="2" /></svg></button>
          ))}
        </div>
      </nav>
      <Toolbars />
      <div className="flex min-h-0 flex-1">
        <Stencils />
        <Drawing />
      </div>
      <div className="flex h-6 shrink-0 items-center gap-2 border-t border-white bg-[#bbd8fe] px-[5px]">
        {[0, 1, 2, 3].map((i) => <div key={i} className="h-4 w-[176px] border border-[#a3c4f2]" />)}
        <div className="mr-4 ml-auto h-4 w-[119px] border border-[#a3c4f2] text-center text-xs leading-[14px] text-[#101a34]">页 1/3</div>
      </div>
      <Taskbar />
    </div>
  );
}
